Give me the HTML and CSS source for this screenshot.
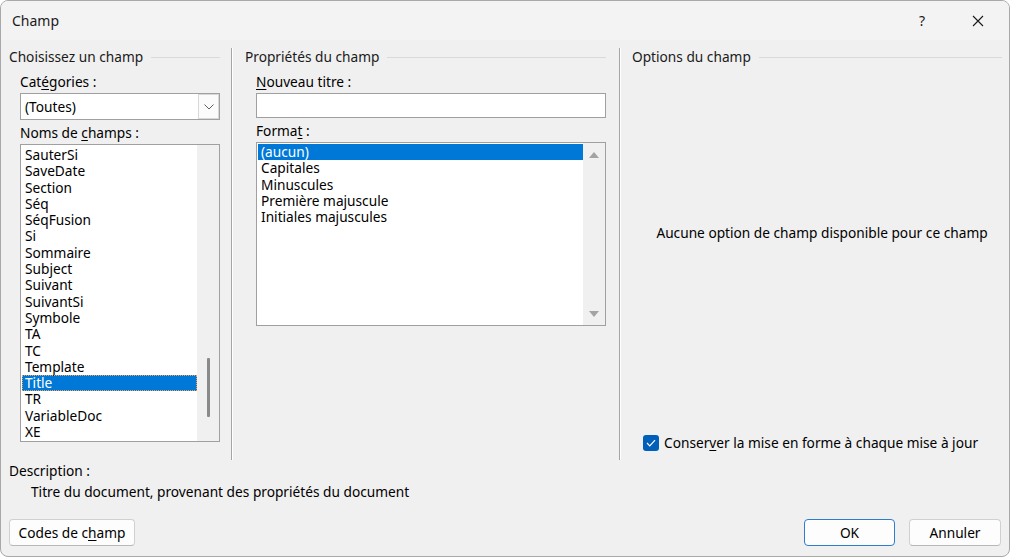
FILE: index.html
```html
<!DOCTYPE html>
<html lang="fr">
<head>
<meta charset="utf-8">
<title>Champ</title>
<link rel="stylesheet" href="styles.css">
</head>
<body>
<div class="window">
  <div class="titlebar">
    <span class="title">Champ</span>
    <div class="tb-buttons">
      <span class="tb-help">?</span>
      <span class="tb-close">
        <svg width="12" height="12" viewBox="0 0 12 12"><path d="M1 1 L11 11 M11 1 L1 11" stroke="#1a1a1a" stroke-width="1.1" fill="none"/></svg>
      </span>
    </div>
  </div>
  <div class="content">
    <div class="columns">
      <section class="col col1">
        <div class="group-head"><span>Choisissez un champ</span><span class="rule"></span></div>
        <div class="indent">
          <div class="label">Cat<u>é</u>gories :</div>
          <div class="combo">
            <span class="combo-text">(Toutes)</span>
            <span class="combo-btn">
              <svg width="10" height="6" viewBox="0 0 10 6"><path d="M0.5 0.5 L5 5 L9.5 0.5" stroke="#606060" stroke-width="1" fill="none"/></svg>
            </span>
          </div>
          <div class="label label-gap">Noms de <u>c</u>hamps :</div>
          <div class="listbox names">
            <ul class="items">
              <li>SauterSi</li>
              <li>SaveDate</li>
              <li>Section</li>
              <li>Séq</li>
              <li>SéqFusion</li>
              <li>Si</li>
              <li>Sommaire</li>
              <li>Subject</li>
              <li>Suivant</li>
              <li>SuivantSi</li>
              <li>Symbole</li>
              <li>TA</li>
              <li>TC</li>
              <li>Template</li>
              <li class="sel focus">Title</li>
              <li>TR</li>
              <li>VariableDoc</li>
              <li>XE</li>
            </ul>
            <div class="vscroll thin"><span class="thumb"></span></div>
          </div>
        </div>
      </section>
      <div class="vsep"></div>
      <section class="col col2">
        <div class="group-head"><span>Propriétés du champ</span><span class="rule"></span></div>
        <div class="indent">
          <div class="label"><u>N</u>ouveau titre :</div>
          <div class="textbox"></div>
          <div class="label label-gap2">Forma<u>t</u> :</div>
          <div class="listbox formats">
            <ul class="items">
              <li class="sel">(aucun)</li>
              <li>Capitales</li>
              <li>Minuscules</li>
              <li>Première majuscule</li>
              <li>Initiales majuscules</li>
            </ul>
            <div class="vscroll arrows">
              <span class="arrow up"></span>
              <span class="arrow down"></span>
            </div>
          </div>
        </div>
      </section>
      <div class="vsep"></div>
      <section class="col col3">
        <div class="group-head"><span>Options du champ</span><span class="rule"></span></div>
        <div class="no-options">Aucune option de champ disponible pour ce champ</div>
        <div class="check-row">
          <span class="checkbox">
            <svg width="10" height="8" viewBox="0 0 10 8"><path d="M1 4 L3.8 6.8 L9 1.2" stroke="#ffffff" stroke-width="1.2" fill="none"/></svg>
          </span>
          <span class="check-label">Conser<u>v</u>er la mise en forme à chaque mise à jour</span>
        </div>
      </section>
    </div>
    <div class="desc">
      <div class="desc-title">Description :</div>
      <div class="desc-text">Titre du document, provenant des propriétés du document</div>
    </div>
    <div class="footer">
      <button class="btn btn-codes">Codes de c<u>h</u>amp</button>
      <div class="footer-right">
        <button class="btn btn-ok">OK</button>
        <button class="btn btn-cancel">Annuler</button>
      </div>
    </div>
  </div>
</div>
</body>
</html>
```

FILE: styles.css
```css
* { box-sizing: border-box; }
html, body { margin: 0; padding: 0; background: #ffffff; }
body {
  font-family: "Noto Sans", "Open Sans", sans-serif;
  font-size: 13.7px;
  color: #000;
}
u { text-decoration: underline; text-underline-offset: 2px; }

.window {
  width: 1010px;
  height: 557px;
  border: 1px solid #a8a8a8;
  border-radius: 8px;
  background: #f0f0f0;
  overflow: hidden;
  display: flex;
  flex-direction: column;
}

.titlebar {
  height: 39px;
  background: #f3f3f3;
  display: flex;
  align-items: center;
  justify-content: space-between;
  padding-left: 11px;
}
.title { font-size: 14px; color: #1a1a1a; line-height: 16px; }
.tb-buttons { display: flex; align-items: center; height: 100%; }
.tb-help {
  width: 46px; text-align: center; font-size: 14px; color: #1a1a1a;
  margin-right: 10px;
}
.tb-close {
  width: 46px; height: 100%;
  display: flex; align-items: center; justify-content: center;
  margin-right: 8px;
}

.content { flex: 1; display: flex; flex-direction: column; }

.columns { display: flex; height: 420px; }
.col { display: flex; flex-direction: column; padding-top: 9px; }
.col1 { width: 230px; padding-left: 8px; padding-right: 11px; }
.col2 { width: 386px; padding-left: 12px; padding-right: 13px; }
.col3 { flex: 1; padding-left: 11px; padding-right: 7px; }

.vsep {
  width: 2px;
  margin-top: 8px;
  border-left: 1px solid #a5a5a5;
  border-right: 1px solid #ffffff;
}

.group-head {
  display: flex; align-items: center;
  line-height: 16px; height: 16px;
  color: #1a1a1a;
  white-space: nowrap;
}
.group-head .rule {
  flex: 1; height: 1px; background: #dadada; margin-left: 8px;
}

.indent { padding-left: 11px; }
.label { line-height: 16px; margin-top: 9px; margin-bottom: 3px; white-space: nowrap; }
.label-gap { margin-top: 5px; }
.label-gap2 { margin-top: 5px; }

.combo {
  height: 27px;
  width: 200px;
  background: #fff;
  border: 1px solid #a0a0a0;
  display: flex; align-items: center; justify-content: space-between;
}
.combo-text { padding-left: 4px; }
.combo-btn {
  width: 21px; height: 100%;
  border: 1px solid #d8d8d8;
  background: #fbfbfb;
  display: flex; align-items: center; justify-content: center;
}

.textbox {
  width: 350px; height: 25px;
  background: #fff;
  border: 1px solid #a0a0a0;
}

.listbox {
  background: #fff;
  border: 1px solid #a0a0a0;
  display: flex;
}
.names { width: 200px; height: 298px; }
.formats { width: 350px; height: 184px; }

.items {
  list-style: none; margin: 0;
  padding: 1px 0 0 1px;
  flex: 1;
}
.names .items { padding-top: 2px; }
.items li {
  line-height: 16.3px; height: 16.3px;
  padding-left: 3px;
  white-space: nowrap;
}
.items li.sel { background: #0078d7; color: #fff; }
.items li.focus { outline: 1px dotted #f0a34a; outline-offset: -1px; }

.vscroll { width: 22px; background: #f0f0f0; }
.vscroll.thin { display: flex; justify-content: center; padding-top: 213px; }
.thumb { width: 3px; height: 59px; background: #8a8a8a; border-radius: 1px; }

.vscroll.arrows {
  display: flex; flex-direction: column; align-items: center; justify-content: space-between;
  padding: 9px 0 8px;
}
.arrow { width: 0; height: 0; border-left: 5px solid transparent; border-right: 5px solid transparent; }
.arrow.up { border-bottom: 6px solid #a3a3a3; }
.arrow.down { border-top: 6px solid #a3a3a3; }

.no-options {
  margin-top: 160px;
  line-height: 16px;
  text-align: center;
  padding-left: 10px;
  white-space: nowrap;
}
.check-row {
  margin-top: 194px;
  margin-left: 11px;
  display: flex; align-items: center;
  white-space: nowrap;
}
.checkbox {
  width: 16px; height: 16px;
  border-radius: 3px;
  background: #005fb8;
  display: flex; align-items: center; justify-content: center;
  margin-right: 5px;
}
.check-label { line-height: 16px; }

.desc { padding-left: 8px; margin-top: 3px; }
.desc-title { line-height: 16px; }
.desc-text { line-height: 16px; margin-top: 5px; padding-left: 22px; }

.footer {
  margin-top: 19px;
  display: flex; justify-content: space-between;
  padding: 0 8px;
}
.footer-right { display: flex; gap: 14px; }
.btn {
  font-family: inherit; font-size: 13.7px; color: #000;
  height: 27px;
  background: #fdfdfd;
  border: 1px solid #d0d0d0;
  border-bottom-color: #b8b8b8;
  border-radius: 4px;
  padding: 0;
  line-height: 16px;
}
.btn-codes { width: 126px; }
.btn-ok { width: 91px; border: 1px solid #2a7dd0; box-shadow: inset 0 0 0 1px #ffffff; }
.btn-cancel { width: 92px; }
```
